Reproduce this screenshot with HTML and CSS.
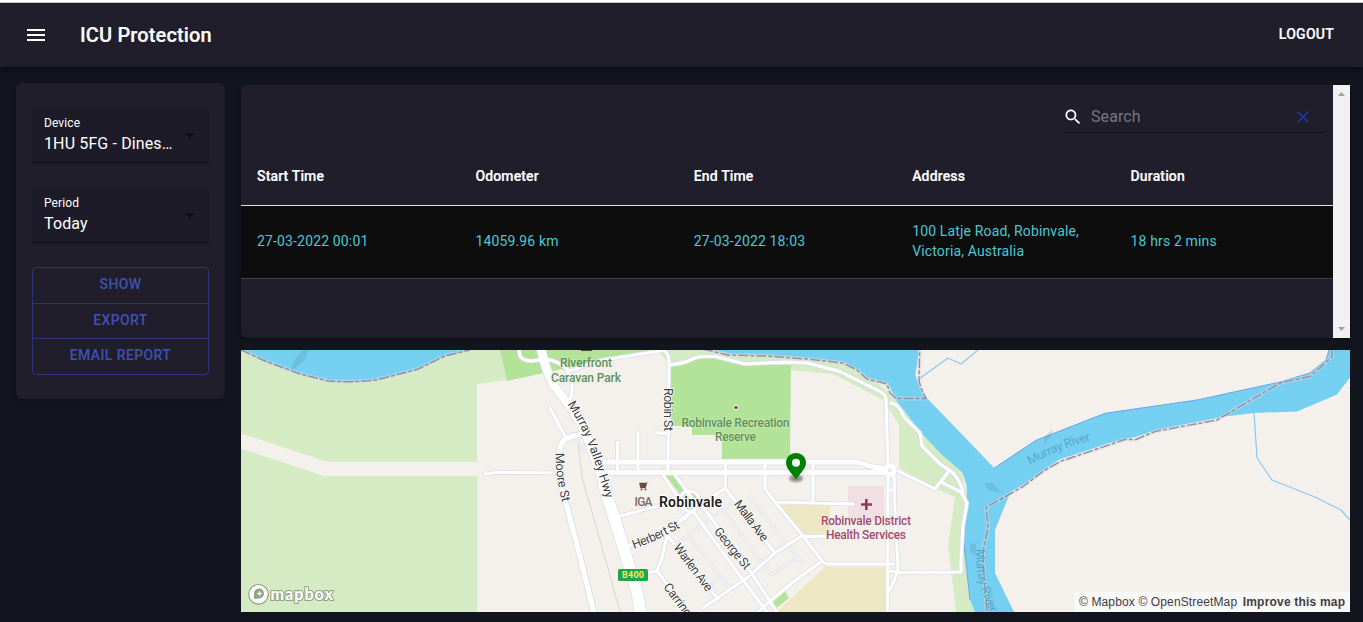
FILE: index.html
```html
<!DOCTYPE html>
<html lang="en">
<head>
<meta charset="utf-8">
<title>ICU Protection</title>
<link rel="stylesheet" href="styles.css">
</head>
<body>
<header class="appbar">
  <svg class="menu-icon" viewBox="0 0 24 24"><path d="M3 18h18v-2H3v2zm0-5h18v-2H3v2zm0-7v2h18V6H3z"/></svg>
  <h1 class="brand">ICU Protection</h1>
  <a class="logout">LOGOUT</a>
</header>
<main class="layout">
  <aside class="filters">
    <div class="select">
      <div class="select-text"><span class="select-label">Device</span><span class="select-value">1HU 5FG - Dines…</span></div>
      <svg class="caret" viewBox="0 0 24 24"><path d="M7 10l5 5 5-5z"/></svg>
    </div>
    <div class="select">
      <div class="select-text"><span class="select-label">Period</span><span class="select-value">Today</span></div>
      <svg class="caret" viewBox="0 0 24 24"><path d="M7 10l5 5 5-5z"/></svg>
    </div>
    <div class="button-group">
      <button class="btn">SHOW</button>
      <button class="btn btn-mid">EXPORT</button>
      <button class="btn">EMAIL REPORT</button>
    </div>
  </aside>
  <section class="content">
    <div class="report">
      <div class="report-body">
        <div class="toolbar">
          <div class="search">
            <svg class="search-icon" viewBox="0 0 24 24"><path d="M15.5 14h-.79l-.28-.27C15.41 12.59 16 11.11 16 9.5 16 5.91 13.09 3 9.5 3S3 5.91 3 9.5 5.91 16 9.5 16c1.61 0 3.09-.59 4.23-1.57l.27.28v.79l5 4.99L20.49 19l-4.99-5zm-6 0C7.01 14 5 11.99 5 9.5S7.01 5 9.5 5 14 7.01 14 9.5 11.99 14 9.5 14z"/></svg>
            <span class="placeholder">Search</span>
            <svg class="clear-icon" viewBox="0 0 24 24"><path d="M19 6.41L17.59 5 12 10.59 6.41 5 5 6.41 10.59 12 5 17.59 6.41 19 12 13.41 17.59 19 19 17.59 13.41 12z"/></svg>
          </div>
        </div>
        <table class="table">
          <thead><tr><th>Start Time</th><th>Odometer</th><th>End Time</th><th>Address</th><th>Duration</th></tr></thead>
          <tbody><tr><td>27-03-2022 00:01</td><td>14059.96 km</td><td>27-03-2022 18:03</td><td>100 Latje Road, Robinvale, Victoria, Australia</td><td>18 hrs 2 mins</td></tr></tbody>
        </table>
      </div>
      <div class="scrollbar">
        <svg class="scroll-arrow" viewBox="0 0 17 17"><path d="M5 11h7L8.500 7z"/></svg>
        <svg class="scroll-arrow" viewBox="0 0 17 17"><path d="M5 6h7L8.500 10z"/></svg>
      </div>
    </div>
    <div class="map">
      <svg class="map-canvas" viewBox="241 350 1109 262">
        <defs>
          <filter id="soft" x="-50%" y="-50%" width="200%" height="200%"><feGaussianBlur stdDeviation="1.2"/></filter>
          <path id="hwy" d="M567 404C576 418 581 427 586 439C592 454 597 469 606 499"/>
          <path id="moore" d="M555.500 453C555.500 470 557 482 563 506"/>
          <path id="herbert" d="M634 549Q662 539 686 524"/>
          <path id="river-e" d="M1030 465Q1058 449 1092 440"/>
          <path id="river-s" d="M976 549C975 575 981 590 991 615"/>
          <g id="roads-main">
            <path d="M663 350Q669 353 669 362L668 472M670 365Q682 363 687 361.500Q697 356 705 356.500H715L745 364L787 362L807 363L840 371.500L877 390Q886 394 886 399L888 466"/>
            <path d="M519 350L520 356Q523 361 532 361L545 359Q560 361 569 371L603 360L660 351M567 370C572 382 574 390 570 400"/>
            <path d="M550 408L558 423L565 436M485 474L497 472.500L559 473M617.500 442V472M638 432V472M656 432.500L668 434M725.500 462V488M765 462V489L775 502L803 536L822 561Q825 564 829 564H894M813 462V502M775 502L853 504M803 536.500H889M663 475L680 501M675 475L697 505M888 475L887.500 612M894 473L895 510L898 568Q896 580 889 591M889 571L900 572.500L961 572V562L963 525L967 503L961 492L941 482M898 471L935 489L949 471M889 490H895"/>
            <path d="M891 403Q898 403 904 417L920 433L922 446L940 464L952 472Q960 480 963 492"/>
            <path d="M693 511L743 580L767 612M703 507L750 571L777 612M680 520L693 511L725 488L775 553M703 608L748 577L775 553L803 535M758 612L770 601L793 582L822 561"/>
            <path d="M667 535L683 555L718 599M628 546L665 532L687 517M620 516L658 506L683 499M667 536L662 558L657 571L647 573M657 571L688 612"/>
          </g>
          <path id="roads-lane" d="M748 495L802 563M723 510L771 575L797 558M688 535L730 588M678 543L732 503M711 585L720 578M578 440L583 451L592 452M673 462V472M662 462V472"/>
          <g id="roads-wide"><path d="M603 462H857L873 467L888 469M603 472.500H888"/></g>
          <path id="road-moore" d="M583 434L571 436.500Q560 440 560 450V475Q560 487 567 507L577 545L594 613"/>
          <path id="road-hwy" d="M541 349C545 365 547 374 555 387C570 406 583 424 587 437C600 470 605 490 613 515"/>
          <path id="road-hwy-s" d="M603 482L617 527L633 578Q640 600 640 613"/>
          <path id="border" d="M241 350L265 361L300 374L328 381Q350 383 376 380L417 369.500L445 356L470 350M703 349L728 355L767 356L807 359L843 363L857 370L867 379L887 384L890 393L896 398.500H926L921 388L919 381L919.700 350M1332 349V357L1310 376.500L1281 382.500L1217 420L1155 431.500L1136 439.500H1125L1060 461.500L1043 471.500L1023 486.500L986 507.500L988 527L983 552L984 578L987 612"/>
        </defs>
        <rect x="241" y="350" width="1109" height="262" fill="#f4f1ec"/>
        <path fill="#d5ebc4" d="M241 350H500L507 380L477 384V462H328L241 433.500ZM241 448.500L324 476H477.500V612H241Z"/>
        <path fill="#b3e398" d="M500 350H661L603 361L553 371L507 381Z"/>
        <path fill="#d5ebc4" d="M657 350H715L850 360L895 398L922 433L961 471L968 500L963 535L970 600L975 612H956L948 545L955 497L935 488L899 468V425L883 400L833 374L791 370V363L745 365L705 357L670 365Z"/>
        <path fill="#b3e398" d="M671 366.500L697 359L712 357L745 365H791L790 459H722V435H692V426H671ZM665 475H675L685 489L680 494Z"/>
        <circle cx="689.500" cy="501" r="10" fill="#b3e398"/>
        <path fill="#eee7c3" d="M779 505H830V533L802 535ZM825 567H887V612H777Z"/>
        <path fill="#b3e398" d="M773 602L785 591.500L789 598L775 609Z"/>
        <rect x="848" y="486" width="36" height="35" fill="#f1dfe4"/>
        <path fill="#75cff0" d="M241 350L265 362L300 374.500L328 381Q350 384 377 380L417 370L445 356L470 350ZM715 350H919L915.300 375L920 388L926 397L994.300 468L1036 440.300L1105 413.300L1197 400L1280 382L1310 373L1326 360L1329 350H1350V377.500L1337 394.500L1297 411.500L1254 413L1225 416.500L1157 430L1135 437L1110 443L1058 460L1043 472L1010 493L995 530V573L1014 612H975L970 600L963 535L967 502L966.500 485L962 472L940 453L921.500 433L896 400L888 384L868 378L857 369L843 362L807 358L767 355L730 354Z"/>
        <path class="river-edge" d="M994.300 468L1036 440.300L1105 413.300L1197 400L1280 382L1310 373L1326 360L1329 350M963 535L970 600"/>
        <path class="shallow" d="M302 350H309L305 360L291 371L293 362ZM984 484L992 482L1001 493L988 490ZM970 545L976 543L976 555L970 553ZM1044 437L1053 429L1051 436L1044 445Z"/>
        <path class="stream" d="M919 379L948 358L961 364L978 350M1254 413L1257 458L1272 480L1315 497L1341 510L1350 520"/>
        <path class="rail" d="M578 443L582 478L590 505L607 565L620 612"/>
        <use href="#border" class="border-halo"/><use href="#border" class="border-line"/>
        <use href="#roads-lane" class="lane-case"/>
        <use href="#roads-main" class="main-case"/>
        <use href="#roads-wide" class="wide-case"/>
        <use href="#road-moore" class="moore-case"/>
        <use href="#road-hwy" class="hwy-case"/><use href="#road-hwy-s" class="hwys-case"/>
        <circle cx="689.500" cy="501" r="10" class="main-case"/>
        <use href="#roads-lane" class="lane-fill"/>
        <use href="#roads-main" class="main-fill"/>
        <use href="#roads-wide" class="wide-fill"/>
        <use href="#road-moore" class="moore-fill"/>
        <use href="#road-hwy" class="hwy-fill"/><use href="#road-hwy-s" class="hwys-fill"/>
        <circle cx="689.500" cy="501" r="10" class="main-fill"/>
        <circle cx="889.700" cy="470.300" r="6.500" fill="#fff"/><circle cx="889.700" cy="470.300" r="1.500" fill="#fff" stroke="#d5d7e6"/>
        <g class="label label-park">
          <text x="586" y="367" textLength="52">Riverfront</text>
          <text x="586" y="381.500" textLength="70">Caravan Park</text>
          <text x="735.500" y="426.500" textLength="108">Robinvale Recreation</text>
          <text x="735.500" y="441" textLength="41">Reserve</text>
        </g>
        <rect x="581" y="349" width="11" height="2" fill="#544"/>
        <circle cx="736" cy="407.500" r="2.200" fill="#6b4a3d" stroke="#fff"/>
        <g class="label label-health">
          <text x="866" y="524.500" textLength="90">Robinvale District</text>
          <text x="866" y="539" textLength="80">Health Services</text>
        </g>
        <path d="M866.300 499V510M861 504.500H872" stroke="#903a5c" stroke-width="2.600"/>
        <path d="M639.500 483H646.800L645.500 488H640.500ZM646.500 483L648 481.500" fill="#6b4a3d" stroke="#6b4a3d" stroke-width=".5"/><circle cx="641.500" cy="489.500" r=".9" fill="#6b4a3d"/><circle cx="645.500" cy="489.500" r=".9" fill="#6b4a3d"/>
        <text class="label label-shop" x="643.500" y="505.500" textLength="18">IGA</text>
        <text class="label label-town" x="690.500" y="507" textLength="63">Robinvale</text>
        <g class="label label-street">
          <text><textPath href="#hwy" textLength="103">Murray Valley Hwy</textPath></text>
          <text><textPath href="#moore" textLength="50">Moore St</textPath></text>
          <text><textPath href="#herbert" textLength="51">Herbert St</textPath></text>
          <text transform="translate(664 388) rotate(90)" textLength="43">Robin St</text>
          <text transform="translate(733.500 504) rotate(53)" textLength="48">Malla Ave</text>
          <text transform="translate(713.500 531.500) rotate(51)" textLength="50">George St</text>
          <text transform="translate(673 547.500) rotate(53)" textLength="56">Warlen Ave</text>
          <text transform="translate(663 587) rotate(53)" textLength="69">Carrington St</text>
        </g>
        <g class="label label-river">
          <text><textPath href="#river-e" textLength="66">Murray River</textPath></text>
          <text><textPath href="#river-s" textLength="66">Murray River</textPath></text>
        </g>
        <rect x="618" y="569" width="30" height="12" rx="1.500" fill="#20a54b"/>
        <text class="label label-shield" x="633" y="578.200" textLength="22">B400</text>
        <ellipse cx="796" cy="478.500" rx="7" ry="3.500" opacity=".4" filter="url(#soft)"/>
        <path fill="#008000" fill-rule="evenodd" d="M796 453C790.300 453 786 457.300 786 462.800C786 469 792.500 474 796 479.500C799.500 474 806 469 806 462.800C806 457.300 801.700 453 796 453Z"/>
        <circle cx="796" cy="462.700" r="4" fill="#fff"/>
        <g class="map-logo">
          <circle cx="258.500" cy="594.300" r="9.800" fill="#fff" stroke="#8fa481" stroke-width="1.200"/>
          <path d="M254 599V593.500A5 5 0 1 1 259 598.500Z" fill="#8fa481"/>
          <path d="M259.500 590.500L260.500 592.800L262.800 593.500L260.500 594.300L259.500 596.600L258.600 594.300L256.300 593.500L258.600 592.800Z" fill="#fff"/>
          <text x="270.500" y="599.500" textLength="62.500">mapbox</text>
        </g>
      </svg>
      <div class="attribution"><span>© Mapbox</span> <span>© OpenStreetMap</span> <b>Improve this map</b></div>
    </div>
  </section>
</main>
</body>
</html>
```
FILE: styles.css
```css
* { box-sizing: border-box; }
body { margin: 0; height: 622px; overflow: hidden; background: #12151d; color: #fff; font-family: Roboto, sans-serif; border-top: 2px solid #fff; }
.appbar { position: relative; height: 65px; padding: 0 29px 0 24px; display: flex; align-items: center; background: #201e2b; border-top: 1px solid #c6c5ca; box-shadow: 0 2px 4px -1px rgba(0,0,0,.2), 0 4px 5px rgba(0,0,0,.14), 0 1px 10px rgba(0,0,0,.12); }
.menu-icon { width: 24px; height: 24px; fill: #fff; }
.brand { margin: 0 auto 0 32px; font-size: 20px; line-height: 32px; font-weight: 500; letter-spacing: .15px; -webkit-text-stroke: .2px #fff; }
.logout { font-size: 14px; line-height: 24px; font-weight: 500; letter-spacing: .25px; padding-bottom: 2px; -webkit-text-stroke: .2px #fff; }
.layout { display: flex; align-items: flex-start; gap: 16px; padding: 16px 13px 0 16px; }
.filters { width: 209px; height: 316px; padding: 24px 16px; border-radius: 6px; background: #201e2b; box-shadow: 0 1px 2px rgba(0,0,0,.3); }
.select { display: flex; align-items: center; justify-content: space-between; height: 56px; margin-bottom: 24px; padding: 0 7px 0 12px; background: #1d1b27; border-bottom: 1px solid #100f16; border-radius: 4px 4px 0 0; }
.select-text { display: flex; flex-direction: column; white-space: nowrap; padding-top: 1px; }
.select-label { font-size: 12px; line-height: 16px; letter-spacing: .1px; }
.select-value { font-size: 16px; line-height: 25px; letter-spacing: .13px; }
.caret { width: 24px; height: 24px; fill: #100f17; }
.button-group { display: flex; flex-direction: column; height: 108px; border: 1px solid #2c3677; border-radius: 4px; }
.btn { height: 35px; padding: 0 0 3px; border: 0; background: none; color: #3f51b5; font: 500 14px/24px Roboto, sans-serif; letter-spacing: .4px; }
.btn-mid { height: 36px; padding-bottom: 2px; border-top: 1px solid #2c3677; border-bottom: 1px solid #2c3677; }
.content { flex: 1; display: flex; flex-direction: column; gap: 12px; padding-top: 2px; }
.report { display: flex; height: 253px; border-radius: 6px 0 0 6px; overflow: hidden; background: #201e2b; box-shadow: 0 1px 3px rgba(0,0,0,.5); }
.report-body { flex: 1; }
.toolbar { display: flex; justify-content: flex-end; height: 64px; padding: 16px 8px 0 0; }
.search { display: flex; align-items: center; width: 262px; height: 32px; padding: 0 12px 0 0; border-bottom: 1px solid #121118; }
.search-icon { width: 20px; height: 20px; fill: #fff; }
.placeholder { flex: 1; margin-left: 8px; font-size: 16px; letter-spacing: .1px; color: #77757d; }
.clear-icon { width: 20px; height: 20px; fill: #2434a6; }
.table { width: 100%; table-layout: fixed; border-collapse: separate; border-spacing: 0; font-size: 14px; line-height: 20px; text-align: left; }
.table th { height: 57px; padding: 0 16px 2px; font-weight: 500; border-bottom: 1px solid #e0e0e0; letter-spacing: .15px; -webkit-text-stroke: .2px #fff; }
.table td { height: 73px; padding: 0 16px 2px; background: #0d0d0d; color: #4bc7d3; border-bottom: 1px solid #403f42; letter-spacing: .15px; }
.scrollbar { display: flex; flex-direction: column; justify-content: space-between; width: 17px; background: #f1f1f1; }
.scroll-arrow { width: 17px; height: 17px; fill: #a3a3a3; }
.map { position: relative; height: 262px; overflow: hidden; }
.map-canvas { display: block; width: 1109px; height: 262px; }
.attribution { position: absolute; right: 0; bottom: 0; width: 276px; height: 20px; padding-left: 5px; background: rgba(255,255,255,.5); color: #404040; font: 12px/20px "Liberation Sans", Arial, sans-serif; letter-spacing: .13px; white-space: nowrap; }
.attribution b { margin-left: 2px; letter-spacing: .2px; }
.map-canvas use, .stream, .rail, .river-edge { fill: none; stroke-linejoin: round; }
.river-edge { stroke: #6aa5ec; stroke-width: 1; }
.shallow { fill: #5794a5; opacity: .25; }
.stream { stroke: #8cc8ef; stroke-width: 1.2; }
.rail { stroke: #d8d5cf; stroke-width: 1; }
.map-canvas .border-halo { stroke: #d9dce0; stroke-width: 4; opacity: .45; }
.map-canvas .border-line { stroke: #9491a5; stroke-width: 1.5; stroke-dasharray: 10 2 4 2; }
.lane-case { stroke: #dfe0ea; stroke-width: 3; }
.lane-fill { stroke: #f6f5f6; stroke-width: 1.4; }
.main-case { fill: none; stroke: #dcdeea; stroke-width: 4.6; stroke-linecap: round; }
.main-fill { fill: none; stroke: #fff; stroke-width: 3; stroke-linecap: round; }
.wide-case { stroke: #dcdeea; stroke-width: 6.5; }
.wide-fill { stroke: #fff; stroke-width: 4.8; }
.moore-case { stroke: #dcdeea; stroke-width: 7; }
.moore-fill { stroke: #fff; stroke-width: 5.2; }
.hwy-case { stroke: #dcdeea; stroke-width: 10; }
.hwy-fill { stroke: #fff; stroke-width: 8.4; }
.hwys-case { stroke: #dcdeea; stroke-width: 13; }
.hwys-fill { stroke: #fff; stroke-width: 11.5; }
.label { font-family: Roboto, sans-serif; font-size: 12px; paint-order: stroke; stroke-linejoin: round; }
.label-park { fill: #61905c; font-weight: 500; text-anchor: middle; stroke: rgba(235,245,225,.5); stroke-width: 1px; }
.label-health { fill: #a34c70; font-weight: 500; text-anchor: middle; stroke: #f7f0ee; stroke-width: 1px; }
.label-shop { fill: #81695c; font-weight: 500; text-anchor: middle; }
.label-town { fill: #202020; font-size: 14px; font-weight: 600; text-anchor: middle; stroke: #fff; stroke-width: 2px; }
.label-street { fill: #3f3f43; font-size: 12.5px; stroke: #fff; stroke-width: 1.5px; }
.label-river { fill: #59a8c6; font-size: 12.5px; }
.label-shield { fill: #f5ec6c; font-size: 9px; font-weight: 700; text-anchor: middle; }
.map-logo text { font: 900 16px Lato, sans-serif; fill: #fff; stroke: #8fa481; stroke-width: 2.200px; paint-order: stroke; stroke-linejoin: round; }
```
